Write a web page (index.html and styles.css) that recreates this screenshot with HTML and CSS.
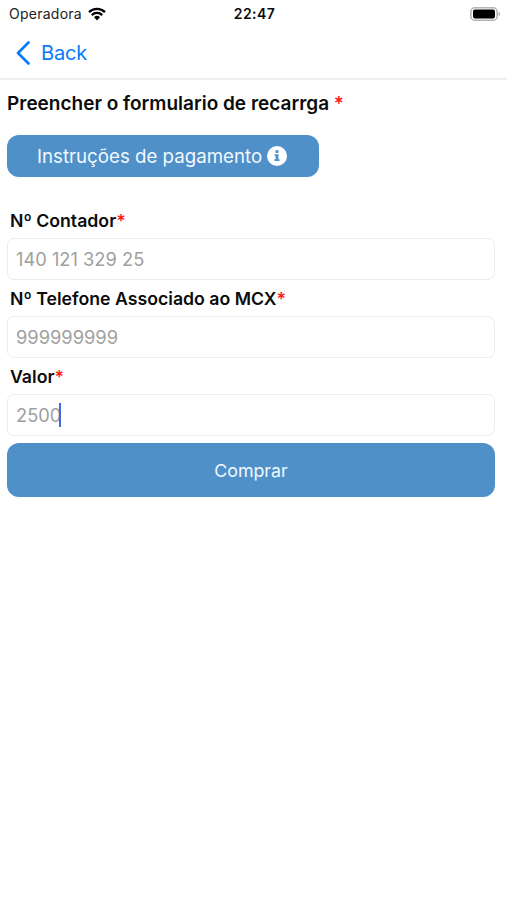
FILE: index.html
```html
<!DOCTYPE html>
<html lang="pt">
<head>
    <meta charset="UTF-8">
    <meta name="viewport" content="width=device-width, initial-scale=1.0">
    <title>Recarga</title>
    <link rel="stylesheet" href="styles.css">
</head>
<body>
    <header class="status-bar">
        <div class="operator">
            <span>Operadora</span>
            <svg class="wifi" viewBox="0 0 18 14" width="18" height="14">
                <path d="M1 5.1a11.4 11.4 0 0 1 16 0M3.8 8.1a7.4 7.4 0 0 1 10.4 0" fill="none" stroke="#000" stroke-width="2.3"/>
                <path d="M9 13.4l-3-3.1a4.3 4.3 0 0 1 6 0z"/>
            </svg>
        </div>
        <div class="time">22:47</div>
        <svg class="battery" viewBox="0 0 31 14" width="31" height="14">
            <rect x="0.8" y="0.8" width="26.4" height="12.4" rx="4" fill="#fff" stroke="#b4b4b4" stroke-width="1.6"/>
            <rect x="3" y="2.6" width="22" height="8.8" rx="1.8"/>
            <path d="M28.6 4.8c2.2.8 2.2 3.6 0 4.4z" fill="#b4b4b4"/>
        </svg>
    </header>
    <nav class="nav-bar">
        <a class="back" href="#">
            <svg viewBox="0 0 14 24" width="14" height="24">
                <path d="M12.5 1.5L2 12l10.5 10.5" fill="none" stroke="#087bfa" stroke-width="2.7" stroke-linecap="round" stroke-linejoin="round"/>
            </svg>
            <span>Back</span>
        </a>
    </nav>
    <main class="container">
        <h2 class="title">Preencher o formulario de recarrga <span class="required">*</span></h2>
        <button class="info-button" type="button">
            <span>Instruções de pagamento</span>
            <svg viewBox="0 0 20 20" width="20" height="20">
                <circle cx="10" cy="10" r="10" fill="#fff"/>
                <path d="M8.5 4.3h3v2.7h-3zM7.6 8.3h3.9v5h1v1.8H7.5v-1.8h1.1v-3.2h-1z" fill="#4f90c8"/>
            </svg>
        </button>
        <form>
            <label for="contador">Nº Contador<span class="required">*</span></label>
            <div class="field">
                <input type="text" id="contador" placeholder="140 121 329 25">
            </div>
            <label for="telefone">Nº Telefone Associado ao MCX<span class="required">*</span></label>
            <div class="field">
                <input type="text" id="telefone" placeholder="999999999">
            </div>
            <label for="valor">Valor<span class="required">*</span></label>
            <div class="field">
                <input type="text" id="valor" placeholder="2500">
                <span class="caret"></span>
            </div>
            <button class="buy-button" type="button">Comprar</button>
        </form>
    </main>
</body>
</html>
```
FILE: styles.css
```css
* {
    box-sizing: border-box;
}
body {
    margin: 0;
    background-color: #fff;
    color: #0c0c0c;
    font-family: Inter, "Liberation Sans", sans-serif;
}
svg {
    display: block;
    flex: none;
}
.status-bar {
    display: grid;
    grid-template-columns: 1fr auto 1fr;
    align-items: center;
    height: 27px;
    padding: 0 6px 0 8px;
    font-size: 14px;
}
.operator {
    display: flex;
    align-items: center;
    gap: 6px;
    padding-left: 1px;
    color: #222;
    letter-spacing: 0.25px;
}
.time {
    font-weight: 600;
    letter-spacing: 0.4px;
}
.battery {
    justify-self: end;
}
.nav-bar {
    height: 53px;
    padding: 13px 17px 0 16px;
    border-bottom: 2px solid #efefef;
}
.back {
    display: inline-flex;
    align-items: center;
    gap: 11px;
    color: #087bfa;
    font-size: 20px;
    line-height: 24px;
    letter-spacing: -0.15px;
    text-decoration: none;
}
.back span {
    padding-top: 1px;
}
.container {
    padding: 12px 12px 0 7px;
}
.title {
    margin: 0 0 20px;
    font-size: 19px;
    font-weight: 600;
    line-height: 23px;
}
.required {
    color: #ff1a1a;
}
button {
    display: flex;
    align-items: center;
    border: none;
    border-radius: 12px;
    background-color: #4f90c8;
    color: #f1f8ff;
    font-family: inherit;
    font-size: 18px;
}
.info-button {
    gap: 5px;
    width: 312px;
    height: 42px;
    margin-bottom: 32px;
    padding: 0 30px;
    font-size: 18.7px;
}
label {
    display: block;
    height: 29px;
    padding-left: 3px;
    font-size: 17.7px;
    font-weight: 600;
    line-height: 23px;
}
.field {
    position: relative;
    margin-bottom: 7px;
}
input {
    display: block;
    width: 100%;
    height: 42px;
    padding: 0 8px;
    border: 1px solid #ececec;
    border-radius: 7px;
    background-color: #fff;
    font-family: inherit;
    font-size: 18.3px;
}
input::placeholder {
    color: #a0a0a0;
}
/* text cursor of the focused field */
.caret {
    position: absolute;
    top: 9px;
    left: 52px;
    width: 2px;
    height: 24px;
    background-color: #4169e1;
}
.buy-button {
    justify-content: center;
    width: 100%;
    height: 54px;
    font-size: 17.8px;
}
```
